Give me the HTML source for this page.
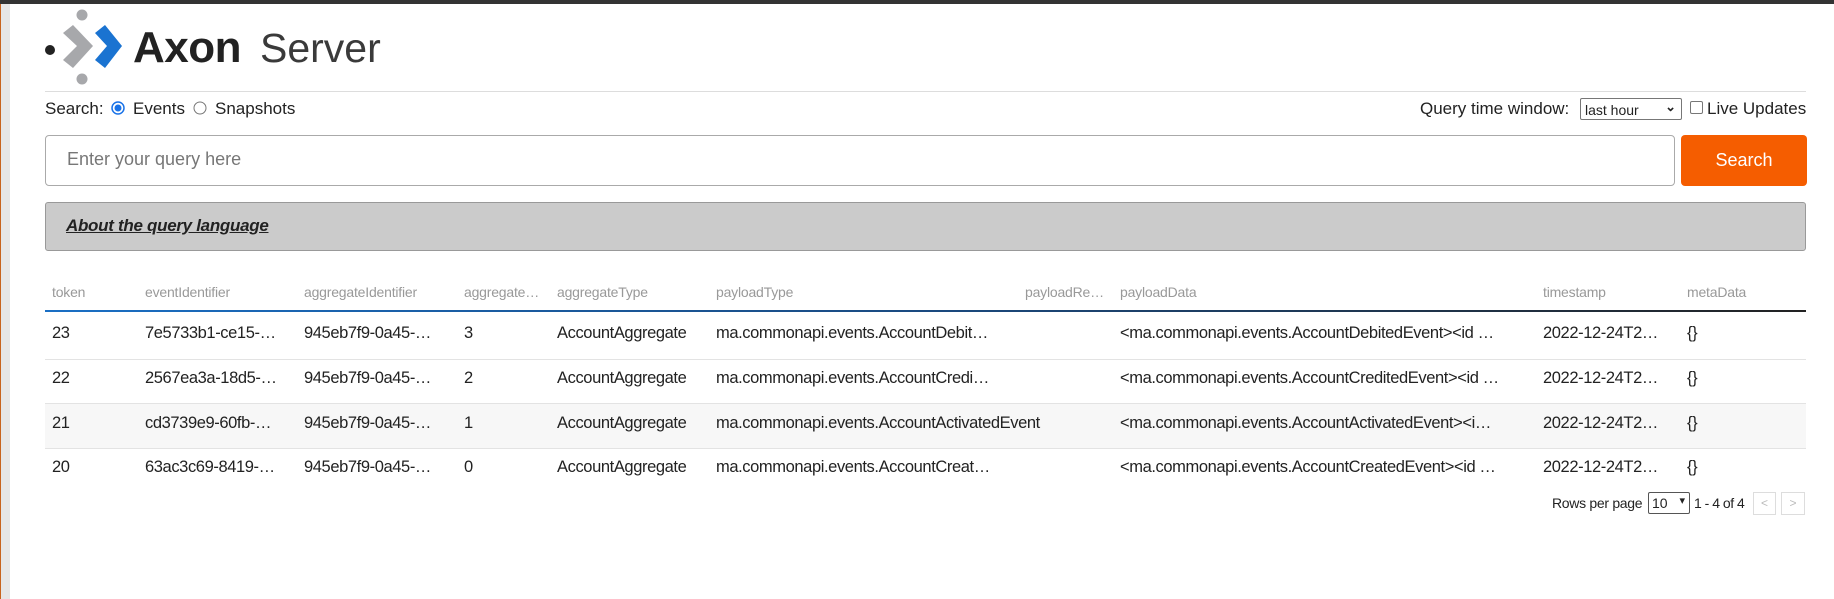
<!DOCTYPE html>
<html><head><meta charset="utf-8"><style>
*{box-sizing:border-box;margin:0;padding:0}
body{width:1834px;height:599px;background:#fff;font-family:"Liberation Sans",sans-serif;color:#222;position:relative;overflow:hidden}
.a{position:absolute;white-space:nowrap}
.topbar{left:0;top:0;width:1834px;height:4px;background:#333}
.strip{left:0;top:4px;width:10px;height:595px;background:#e6e6e6;border-left:1px solid #c8641e}
.hdr{font-size:14px;color:#999;top:284px;letter-spacing:-0.2px}
.cell{font-size:16.5px;color:#222;letter-spacing:-0.4px}
.sep{left:45px;width:1761px;height:1px;background:#e3e3e3}
</style></head><body>
<div class="a topbar"></div>
<div class="a strip"></div>
<svg class="a" style="left:40px;top:8px" width="90" height="80" viewBox="0 0 90 80">
<circle cx="42" cy="7" r="5.5" fill="#a7a8ab"/>
<circle cx="42" cy="71" r="5.5" fill="#a7a8ab"/>
<circle cx="10" cy="42" r="5" fill="#222"/>
<path d="M23 25 L33 17 L53 38 L33 60 L23 52 L37 38 Z" fill="#a7a8ab"/>
<path d="M55 25 L65 17 L82 38 L65 60 L55 52 L67 38 Z" fill="#1a73d1"/>
</svg>
<div class="a" style="left:133px;top:23px;font-size:44px;font-weight:bold;color:#222;letter-spacing:-0.5px">Axon</div>
<div class="a" style="left:260px;top:25px;font-size:41px;font-weight:normal;color:#3a3a3a">Server</div>
<div class="a" style="left:45px;top:91px;width:1761px;height:1px;background:#ddd"></div>
<div class="a" style="left:45px;top:99px;font-size:17px">Search:</div>
<svg class="a" style="left:111px;top:101px" width="14" height="14"><circle cx="7" cy="7" r="6" fill="#fff" stroke="#1a73e8" stroke-width="1.5"/><circle cx="7" cy="7" r="3.5" fill="#1a73e8"/></svg>
<div class="a" style="left:133px;top:99px;font-size:17px">Events</div>
<svg class="a" style="left:193px;top:101px" width="14" height="14"><circle cx="7" cy="7" r="6" fill="#fff" stroke="#777" stroke-width="1"/></svg>
<div class="a" style="left:215px;top:99px;font-size:17px">Snapshots</div>
<div class="a" style="left:1420px;top:99px;font-size:17px">Query time window:</div>
<div class="a" style="left:1580px;top:98px;width:102px;height:22px;border:1px solid #777;border-radius:2px;font-size:14px;padding:3px 4px">last hour<span style="position:absolute;right:5px;top:0px;font-size:13px;font-weight:bold">&#8964;</span></div>
<div class="a" style="left:1690px;top:101px;width:13px;height:13px;border:1px solid #777;border-radius:2px"></div>
<div class="a" style="left:1707px;top:99px;font-size:17px">Live Updates</div>
<div class="a" style="left:45px;top:135px;width:1630px;height:51px;border:1px solid #aaa;border-radius:4px;font-size:18px;color:#777;padding:13px 21px">Enter your query here</div>
<div class="a" style="left:1681px;top:135px;width:126px;height:51px;background:#f55d00;border-radius:4px;color:#fff;font-size:18px;text-align:center;line-height:51px">Search</div>
<div class="a" style="left:45px;top:202px;width:1761px;height:49px;background:#cbcbcb;border:1px solid #999;border-radius:3px"></div>
<div class="a" style="left:66px;top:216px;font-size:17px;font-weight:bold;font-style:italic;text-decoration:underline;color:#222;letter-spacing:-0.3px">About the query language</div>

<div class="a hdr" style="left:52px">token</div>
<div class="a hdr" style="left:145px">eventIdentifier</div>
<div class="a hdr" style="left:304px">aggregateIdentifier</div>
<div class="a hdr" style="left:464px">aggregate…</div>
<div class="a hdr" style="left:557px">aggregateType</div>
<div class="a hdr" style="left:716px">payloadType</div>
<div class="a hdr" style="left:1025px">payloadRe…</div>
<div class="a hdr" style="left:1120px">payloadData</div>
<div class="a hdr" style="left:1543px">timestamp</div>
<div class="a hdr" style="left:1687px">metaData</div>
<div class="a" style="left:45px;top:310px;width:1761px;height:2px;background:linear-gradient(90deg,#1a6fc4,#1a4a80 50%,#222)"></div>

<div class="a" style="left:45px;top:404px;width:1761px;height:44px;background:#f7f7f7"></div>
<div class="a sep" style="top:359px"></div>
<div class="a sep" style="top:403px"></div>
<div class="a sep" style="top:448px"></div>

<div class="a cell" style="left:52px;top:324px">23</div><div class="a cell" style="left:145px;top:324px">7e5733b1-ce15-…</div><div class="a cell" style="left:304px;top:324px">945eb7f9-0a45-…</div><div class="a cell" style="left:464px;top:324px">3</div><div class="a cell" style="left:557px;top:324px">AccountAggregate</div><div class="a cell" style="left:716px;top:324px">ma.commonapi.events.AccountDebit…</div><div class="a cell" style="left:1120px;top:324px">&lt;ma.commonapi.events.AccountDebitedEvent&gt;&lt;id …</div><div class="a cell" style="left:1543px;top:324px">2022-12-24T2…</div><div class="a cell" style="left:1687px;top:324px">{}</div>
<div class="a cell" style="left:52px;top:369px">22</div><div class="a cell" style="left:145px;top:369px">2567ea3a-18d5-…</div><div class="a cell" style="left:304px;top:369px">945eb7f9-0a45-…</div><div class="a cell" style="left:464px;top:369px">2</div><div class="a cell" style="left:557px;top:369px">AccountAggregate</div><div class="a cell" style="left:716px;top:369px">ma.commonapi.events.AccountCredi…</div><div class="a cell" style="left:1120px;top:369px">&lt;ma.commonapi.events.AccountCreditedEvent&gt;&lt;id …</div><div class="a cell" style="left:1543px;top:369px">2022-12-24T2…</div><div class="a cell" style="left:1687px;top:369px">{}</div>
<div class="a cell" style="left:52px;top:414px">21</div><div class="a cell" style="left:145px;top:414px">cd3739e9-60fb-…</div><div class="a cell" style="left:304px;top:414px">945eb7f9-0a45-…</div><div class="a cell" style="left:464px;top:414px">1</div><div class="a cell" style="left:557px;top:414px">AccountAggregate</div><div class="a cell" style="left:716px;top:414px">ma.commonapi.events.AccountActivatedEvent</div><div class="a cell" style="left:1120px;top:414px">&lt;ma.commonapi.events.AccountActivatedEvent&gt;&lt;i…</div><div class="a cell" style="left:1543px;top:414px">2022-12-24T2…</div><div class="a cell" style="left:1687px;top:414px">{}</div>
<div class="a cell" style="left:52px;top:458px">20</div><div class="a cell" style="left:145px;top:458px">63ac3c69-8419-…</div><div class="a cell" style="left:304px;top:458px">945eb7f9-0a45-…</div><div class="a cell" style="left:464px;top:458px">0</div><div class="a cell" style="left:557px;top:458px">AccountAggregate</div><div class="a cell" style="left:716px;top:458px">ma.commonapi.events.AccountCreat…</div><div class="a cell" style="left:1120px;top:458px">&lt;ma.commonapi.events.AccountCreatedEvent&gt;&lt;id …</div><div class="a cell" style="left:1543px;top:458px">2022-12-24T2…</div><div class="a cell" style="left:1687px;top:458px">{}</div>

<div class="a" style="left:1552px;top:495px;font-size:14px;letter-spacing:-0.3px">Rows per page</div>
<div class="a" style="left:1648px;top:492px;width:42px;height:22px;border:1px solid #555;border-radius:2px;font-size:14px;padding:2px 3px">10<span style="position:absolute;right:4px;top:1px;font-size:11px">▾</span></div>
<div class="a" style="left:1694px;top:495px;font-size:14px;letter-spacing:-0.5px">1 - 4 of 4</div>
<div class="a" style="left:1753px;top:492px;width:23px;height:23px;border:1px solid #ddd;font-size:12px;color:#bbb;text-align:center;line-height:21px">&lt;</div>
<div class="a" style="left:1781px;top:492px;width:24px;height:23px;border:1px solid #ddd;font-size:12px;color:#bbb;text-align:center;line-height:21px">&gt;</div>
</body></html>
